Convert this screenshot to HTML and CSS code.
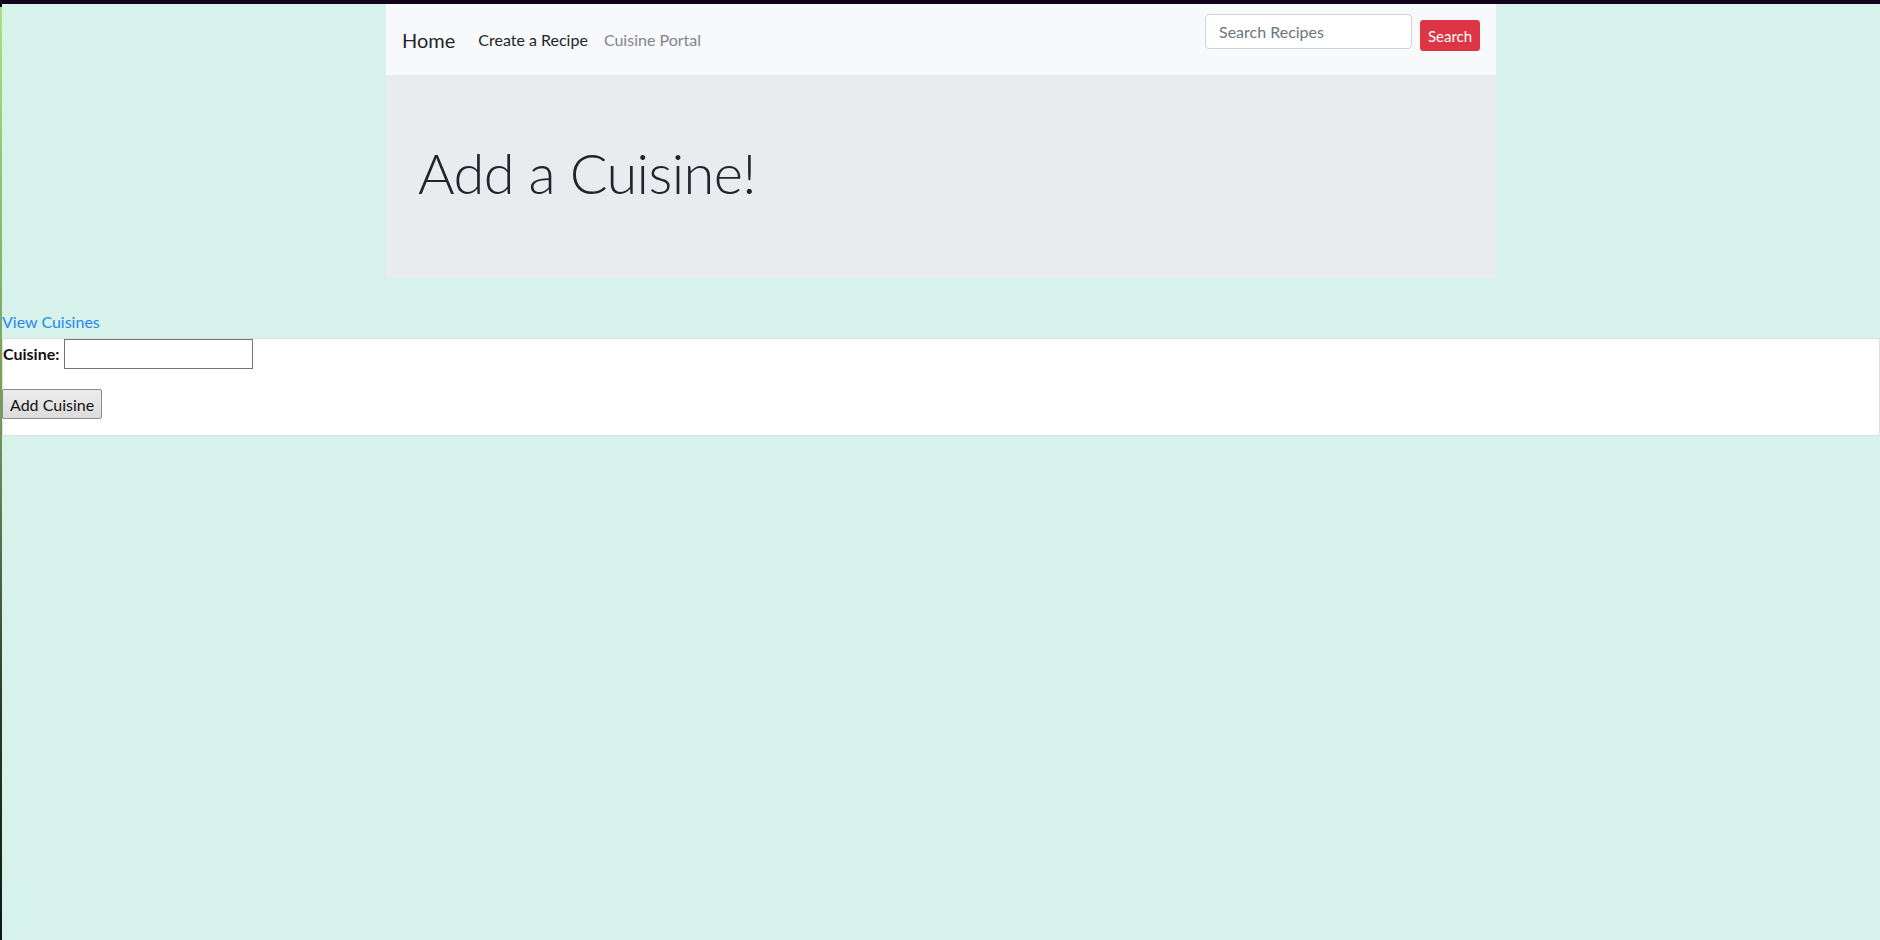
FILE: index.html
```html
<!DOCTYPE html>
<html lang="en">
<head>
<meta charset="utf-8">
<title>Add a Cuisine</title>
<link rel="stylesheet" href="styles.css">
</head>
<body>
<div class="frame">
  <div class="container">
    <nav class="navbar">
      <a class="brand" href="#">Home</a>
      <ul class="nav-links">
        <li><a class="nav-link active" href="#">Create a Recipe</a></li>
        <li><a class="nav-link muted" href="#">Cuisine Portal</a></li>
      </ul>
      <form class="search-form">
        <input class="search-input" type="text" placeholder="Search Recipes">
        <button class="search-btn" type="button">Search</button>
      </form>
    </nav>
    <div class="jumbotron">
      <h1 class="display">Add a Cuisine!</h1>
    </div>
  </div>
  <a class="view-link" href="#">View Cuisines</a>
  <form class="cuisine-form">
    <div class="field-row">
      <label class="field-label" for="cuisine">Cuisine:</label>
      <input class="field-input" id="cuisine" type="text">
    </div>
    <div class="actions">
      <button class="add-btn" type="button">Add Cuisine</button>
    </div>
  </form>
</div>
</body>
</html>
```

FILE: styles.css
```css
* { box-sizing: border-box; }

html, body {
  margin: 0;
  padding: 0;
}

body {
  background: #d7f2eb;
  font-family: Lato, "Noto Sans", sans-serif;
  font-size: 16px;
  line-height: 1.5;
  color: #212529;
}

.frame {
  min-height: 940px;
  border-top: 4px solid #13041d;
  border-left: 2px solid transparent;
  border-image: linear-gradient(to bottom, #13041d 0, #13041d 4px, #a9e27c 4px, #6f9a58 45%, #2a3a28 75%, #101810 100%) 1;
  border-right: 0;
  border-bottom: 0;
}

.container {
  width: 1110px;
  margin: 0 auto;
}

.navbar {
  display: flex;
  align-items: center;
  height: 71px;
  padding: 0 16px;
  background: #f8f9fa;
}

.brand {
  font-size: 20px;
  line-height: 30px;
  color: #212529;
  text-decoration: none;
  margin-right: 23px;
  margin-top: 1px;
}

.nav-links {
  display: flex;
  list-style: none;
  margin: 0;
  padding: 0;
  gap: 16px;
  margin-top: 1px;
}

.nav-link {
  text-decoration: none;
  font-size: 16px;
  line-height: 24px;
}

.nav-link.active { color: #212529; }
.nav-link.muted { color: #80858a; }

.search-form {
  margin-left: auto;
  align-self: flex-start;
  margin-top: 10px;
  display: flex;
  align-items: flex-start;
  gap: 8px;
}

.search-input {
  width: 207px;
  height: 35px;
  padding: 0 13px;
  border: 1px solid #ced4da;
  border-radius: 4px;
  background: #fff;
  font-family: inherit;
  font-size: 16px;
  color: #495057;
}

.search-input::placeholder { color: #6c757d; }

.search-btn {
  margin-top: 6px;
  height: 31px;
  width: 60px;
  padding: 0;
  border: 1px solid #dc3545;
  border-radius: 3px;
  background: #dc3545;
  color: #fff;
  font-family: inherit;
  font-size: 15px;
}

.jumbotron {
  background: #e9ecef;
  padding: 64px 32px;
  margin-bottom: 32px;
}

.display {
  margin: 0 0 8px;
  font-size: 56px;
  font-weight: 300;
  line-height: 1.2;
  letter-spacing: -0.6px;
  color: #212529;
}

.view-link {
  display: block;
  color: #1e88ef;
  text-decoration: none;
  line-height: 24px;
}

.cuisine-form {
  margin-top: 4px;
  background: #fff;
  border: 1px solid #dedede;
  border-radius: 3px;
  padding-bottom: 16px;
}

.field-row {
  display: flex;
  align-items: center;
  gap: 5px;
}

.field-label {
  font-weight: 700;
  color: #111;
}

.field-input {
  width: 189px;
  height: 30px;
  border: 1px solid #767676;
  border-radius: 0;
  background: #fff;
}

.actions {
  margin-top: 20px;
}

.add-btn {
  height: 30px;
  padding: 0 7px;
  margin-left: -1px;
  font-family: inherit;
  font-size: 16px;
  color: #111;
  background: linear-gradient(#ececec, #dcdcdc);
  border: 1px solid #8a8a8a;
  border-radius: 2px;
}
```
